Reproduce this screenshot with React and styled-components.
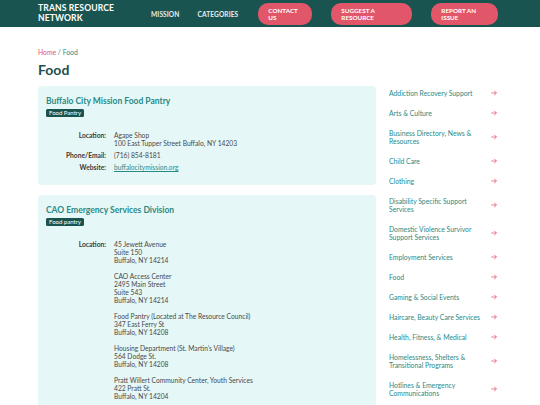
import React from 'react'
import styled, { createGlobalStyle } from 'styled-components'

const GlobalStyle = createGlobalStyle`
    * { box-sizing: border-box; }
    body {
        margin: 0;
        font-family: Lato, "Open Sans", sans-serif;
        background: #ffffff;
        color: #3b3b3b;
    }
`

const Header = styled.header`
    height: 27px;
    background-color: #1a5451;
    display: flex;
    align-items: center;
    padding-left: 38px;
`

const Logo = styled.div`
    width: 113px;
    color: #ffffff;
    font-weight: 700;
    font-size: 8.6px;
    line-height: 9.5px;
    letter-spacing: 0.1px;
`

const Nav = styled.nav`
    display: flex;
    align-items: center;
`

const NavLink = styled.a`
    color: #e6efee;
    font-size: 6.6px;
    font-weight: 700;
    letter-spacing: 0.1px;
    margin-right: ${props => props.gap}px;
`

const PillButton = styled.a`
    display: flex;
    align-items: center;
    width: ${props => props.width}px;
    height: 22px;
    padding-left: 10px;
    margin-right: ${props => props.gap}px;
    border-radius: 10px;
    background-color: #e2566a;
    color: #ffffff;
    font-size: 6.3px;
    font-weight: 700;
    line-height: 7px;
`

const Page = styled.div`
    padding: 0 38px;
`

const Breadcrumb = styled.div`
    margin-top: 21px;
    font-size: 6.8px;
    color: #2b8985;
`

const Crumb = styled.a`
    color: #e2566a;
`

const Title = styled.h1`
    margin: 5px 0 0;
    font-size: 14px;
    font-weight: 700;
    color: #1d4f4c;
    line-height: 18px;
`

const Layout = styled.div`
    display: grid;
    grid-template-columns: 338px 1fr;
    align-items: start;
    margin-top: 7px;
`

const Main = styled.div`
    display: flex;
    flex-direction: column;
    gap: 10px;
`

const Card = styled.div`
    background-color: #e6f7f7;
    border-radius: 4px;
    padding: 10px 8px 14px;
`

const CardTitle = styled.h2`
    margin: 0;
    font-size: 8.5px;
    font-weight: 700;
    color: #2a8a86;
    line-height: 10px;
`

const Badge = styled.span`
    display: block;
    width: fit-content;
    margin-top: 3px;
    padding: 0 3px;
    height: 8px;
    line-height: 8px;
    border-radius: 1.5px;
    background-color: #1a5451;
    color: #ffffff;
    font-size: 6px;
`

const Details = styled.div`
    display: grid;
    grid-template-columns: 60px 1fr;
    column-gap: 8px;
    row-gap: 4px;
    margin-top: 14px;
    font-size: 6.7px;
    line-height: 8px;
`

const Label = styled.div`
    text-align: right;
    font-weight: 700;
    color: #3a3a3a;
`

const Value = styled.div`
    color: #4a4a4a;
`

const Group = styled.div`
    & + & { margin-top: 8px; }
`

const WebLink = styled.a`
    color: #2a8a86;
    text-decoration: underline;
`

const Sidebar = styled.ul`
    list-style: none;
    margin: -3px 0 0;
    padding: 0 0 0 13px;
`

const SideItem = styled.li`
    display: flex;
    align-items: center;
    justify-content: space-between;
    padding: 6px 0;
    width: 108px;
`

const SideText = styled.a`
    width: 95px;
    font-size: 6.8px;
    line-height: 8px;
    color: #2b8985;
`

const Arrow = () => (
    <svg width="6" height="6" viewBox="0 0 6 6" fill="none" stroke="#e2566a" strokeWidth="0.8">
        <path d="M0.3 3 H5.4 M3.2 0.8 L5.4 3 L3.2 5.2" />
    </svg>
)

const categories = [
    'Addiction Recovery Support',
    'Arts & Culture',
    'Business Directory, News & Resources',
    'Child Care',
    'Clothing',
    'Disability Specific Support Services',
    'Domestic Violence Survivor Support Services',
    'Employment Services',
    'Food',
    'Gaming & Social Events',
    'Haircare, Beauty Care Services',
    'Health, Fitness, & Medical',
    'Homelessness, Shelters & Transitional Programs',
    'Hotlines & Emergency Communications',
]

const caoLocations = [
    ['45 Jewett Avenue', 'Suite 150', 'Buffalo, NY 14214'],
    ['CAO Access Center', '2495 Main Street', 'Suite 543', 'Buffalo, NY 14214'],
    ['Food Pantry (Located at The Resource Council)', '347 East Ferry St', 'Buffalo, NY 14208'],
    ['Housing Department (St. Martin\u2019s Village)', '564 Dodge St.', 'Buffalo, NY 14208'],
    ['Pratt Willert Community Center, Youth Services', '422 Pratt St.', 'Buffalo, NY 14204'],
]

const Lines = ({ lines }) => lines.map((l, i) => <div key={i}>{l}</div>)

export default function App() {
    return (
        <>
            <GlobalStyle />
            <Header>
                <Logo>TRANS RESOURCE<br />NETWORK</Logo>
                <Nav>
                    <NavLink gap={18}>MISSION</NavLink>
                    <NavLink gap={20}>CATEGORIES</NavLink>
                    <PillButton width={54} gap={19}>CONTACT<br />US</PillButton>
                    <PillButton width={81} gap={19}>SUGGEST A<br />RESOURCE</PillButton>
                    <PillButton width={67} gap={0}>REPORT AN<br />ISSUE</PillButton>
                </Nav>
            </Header>
            <Page>
                <Breadcrumb><Crumb>Home</Crumb> / Food</Breadcrumb>
                <Title>Food</Title>
                <Layout>
                    <Main>
                        <Card>
                            <CardTitle>Buffalo City Mission Food Pantry</CardTitle>
                            <Badge>Food Pantry</Badge>
                            <Details>
                                <Label>Location:</Label>
                                <Value><Lines lines={['Agape Shop', '100 East Tupper Street Buffalo, NY 14203']} /></Value>
                                <Label>Phone/Email:</Label>
                                <Value>(716) 854-8181</Value>
                                <Label>Website:</Label>
                                <Value><WebLink>buffalocitymission.org</WebLink></Value>
                            </Details>
                        </Card>
                        <Card>
                            <CardTitle>CAO Emergency Services Division</CardTitle>
                            <Badge>Food pantry</Badge>
                            <Details>
                                <Label>Location:</Label>
                                <Value>
                                    {caoLocations.map((g, i) => (
                                        <Group key={i}><Lines lines={g} /></Group>
                                    ))}
                                </Value>
                            </Details>
                        </Card>
                    </Main>
                    <Sidebar>
                        {categories.map(c => (
                            <SideItem key={c}>
                                <SideText>{c}</SideText>
                                <Arrow />
                            </SideItem>
                        ))}
                    </Sidebar>
                </Layout>
            </Page>
        </>
    )
}
